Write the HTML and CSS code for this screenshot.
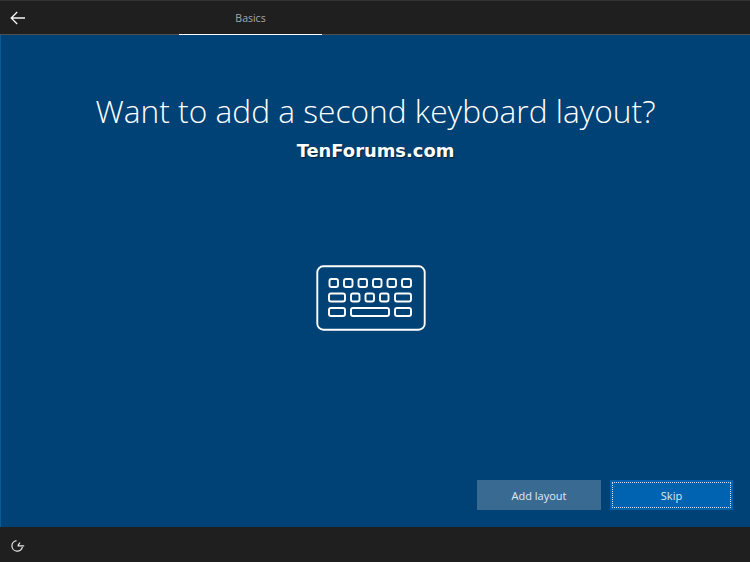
FILE: index.html
```html
<!DOCTYPE html>
<html lang="en">
<head>
<meta charset="utf-8">
<title>Want to add a second keyboard layout?</title>
<link rel="stylesheet" href="styles.css">
</head>
<body>
<div class="page">
  <header class="topbar">
    <button class="back" aria-label="Back">
      <svg width="16" height="14" viewBox="0 0 16 14" fill="none" stroke="#f4f4f4" stroke-width="1.3"><path d="M15 7H1.5M7.2 1 1.2 7l6 6"/></svg>
    </button>
    <nav class="tabs"><div class="tab">Basics</div></nav>
  </header>
  <main class="content">
    <h1 class="title">Want to add a second keyboard layout?</h1>
    <div class="watermark">TenForums.com</div>
    <div class="hero">
      <svg width="110" height="66" viewBox="0 0 110 66" fill="none" stroke="#fff" stroke-width="1.9">
        <rect x="1.3" y="1.3" width="107.4" height="63.4" rx="6"/>
        <rect x="13.5" y="14" width="8.5" height="8" rx="2"/>
        <rect x="28" y="14" width="8.5" height="8" rx="2"/>
        <rect x="42.5" y="14" width="8.5" height="8" rx="2"/>
        <rect x="57" y="14" width="8.5" height="8" rx="2"/>
        <rect x="71.5" y="14" width="8.5" height="8" rx="2"/>
        <rect x="86" y="14" width="9" height="8" rx="2"/>
        <rect x="13" y="28.5" width="16" height="8" rx="2"/>
        <rect x="35" y="28.5" width="8.5" height="8" rx="2"/>
        <rect x="49.5" y="28.5" width="8.5" height="8" rx="2"/>
        <rect x="64" y="28.5" width="8.5" height="8" rx="2"/>
        <rect x="79" y="28.5" width="16" height="8" rx="2"/>
        <rect x="13" y="43" width="16" height="8" rx="2"/>
        <rect x="35" y="43" width="38" height="8" rx="2"/>
        <rect x="79" y="43" width="16" height="8" rx="2"/>
      </svg>
    </div>
    <div class="actions">
      <button class="btn btn-secondary">Add layout</button>
      <button class="btn btn-primary"><span class="focus">Skip</span></button>
    </div>
  </main>
  <footer class="bottombar">
    <svg width="16" height="16" viewBox="0 0 16 16" fill="none" stroke="#e8e8e8" stroke-width="1.2"><path d="M6.5 2.6A5.3 5.3 0 1 0 12.4 9"/><path d="M7.6 7.8h6.6M10 4.6l-2.2 3"/></svg>
  </footer>
</div>
</body>
</html>
```
FILE: styles.css
```css
* { box-sizing: border-box; }
html, body { margin: 0; padding: 0; }
body { font-family: "Open Sans", "Liberation Sans", sans-serif; background: #1f1f1f; }
.page { width: 750px; height: 562px; display: flex; flex-direction: column; overflow: hidden; }
.topbar { height: 35px; flex: none; display: flex; background: #1f1f1f; border-top: 1px solid #333; border-bottom: 1px solid #505050; }
.back { width: 35px; flex: none; padding: 0; background: none; border: 0; display: flex; align-items: center; justify-content: center; }
.tabs { margin-left: 144px; display: flex; }
.tab { width: 143px; height: 35px; margin-bottom: -1px; display: flex; align-items: center; justify-content: center; color: #a8a8a8; font-size: 10.5px; border-bottom: 2px solid #fff; }
.content { flex: 1; background: #004275; display: flex; flex-direction: column; align-items: center; border-left: 1px solid #0a5a94; }
.title { margin: 54px 0 0; font-size: 31.7px; font-weight: 300; line-height: 44px; color: #fff; white-space: nowrap; }
.watermark { margin-top: 7px; font-family: "DejaVu Sans", Verdana, sans-serif; font-size: 17.9px; font-weight: 700; line-height: 22px; color: #fff; text-shadow: 1px 1px 1px #00203a; }
.hero { margin-top: 103px; margin-right: 9px; height: 66px; }
.hero svg { display: block; }
.actions { margin-top: 149px; align-self: flex-end; display: flex; gap: 9px; padding-right: 17px; }
.btn { width: 124px; height: 30px; border: 0; padding: 0; color: #dfeaf4; font-family: inherit; font-size: 11px; display: flex; align-items: center; justify-content: center; }
.btn-secondary { background: #386a92; }
.btn-primary { width: 123px; background: #0063b1; padding: 2px; }
.focus { width: 100%; height: 100%; display: flex; align-items: center; justify-content: center; border: 1px dotted #cfe2f3; }
.bottombar { height: 35px; flex: none; background: #1f1f1f; display: flex; align-items: center; padding-left: 10px; padding-top: 2px; }
```
